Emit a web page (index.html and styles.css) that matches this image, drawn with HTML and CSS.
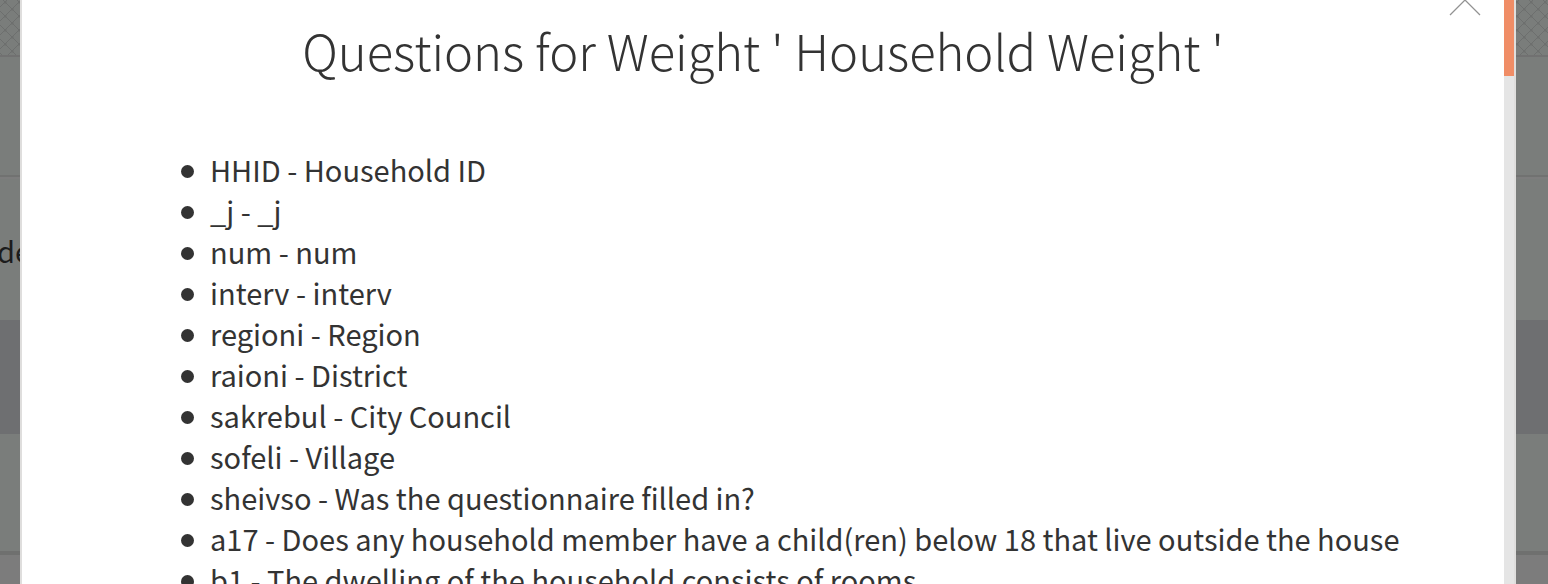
FILE: index.html
```html
<!DOCTYPE html>
<html lang="en">
<head>
<meta charset="utf-8">
<title>Questions for Weight</title>
<link rel="stylesheet" href="styles.css">
</head>
<body>
<div class="backdrop" aria-hidden="true">
  <svg class="lattice" width="100%" height="55">
    <defs>
      <pattern id="diamonds" width="14" height="14" patternUnits="userSpaceOnUse">
        <path d="M3 0L14 11M0 11L3 14M0 7L7 0M7 14L14 7" stroke="#6d6f6e" stroke-width="1" fill="none"/>
        <path d="M4 2h3M5 1v3M11 9h3M12 8v3" stroke="#6d6f6e"/>
      </pattern>
    </defs>
    <rect width="100%" height="100%" fill="url(#diamonds)"/>
  </svg>
  <div class="band band-head"></div>
  <div class="band band-row">de</div>
  <div class="band band-alt"></div>
  <div class="band band-last"></div>
  <div class="band band-foot"></div>
</div>
<main class="modal" role="dialog" aria-labelledby="title">
  <div class="content">
    <button class="up" type="button" aria-label="Scroll up">
      <svg width="32" height="16" viewBox="0 0 32 16"><path d="M1 15L16 0L31 15" fill="none" stroke="#929292" stroke-width="1.3"/></svg>
    </button>
    <h1 class="title" id="title">Questions for Weight ' Household Weight '</h1>
    <ul class="questions">
      <li>HHID - Household ID</li>
      <li>_j - _j</li>
      <li>num - num</li>
      <li>interv - interv</li>
      <li>regioni - Region</li>
      <li>raioni - District</li>
      <li>sakrebul - City Council</li>
      <li>sofeli - Village</li>
      <li>sheivso - Was the questionnaire filled in?</li>
      <li>a17 - Does any household member have a child(ren) below 18 that live outside the house</li>
      <li>b1 - The dwelling of the household consists of rooms</li>
    </ul>
  </div>
  <div class="track"><div class="thumb"></div></div>
</main>
</body>
</html>
```
FILE: styles.css
```css
* { box-sizing: border-box; }
body {
  margin: 0;
  height: 100vh;
  overflow: hidden;
  color: #333;
  background: #7a7d7b;
  font-family: "Noto Sans CJK SC", "Noto Sans", sans-serif;
}
.backdrop {
  position: absolute;
  inset: 0;
  z-index: -1;
  display: flex;
  flex-direction: column;
  overflow: hidden;
  background: #7a7d7b;
  color: #1c1c1c;
  font-size: 29px;
}
.lattice { display: block; flex: none; }
.band { flex: none; }
.band-head { height: 122px; border-top: 2px solid #717171; border-bottom: 2px solid #717271; }
.band-row { height: 143px; padding-top: 51px; text-indent: -3px; line-height: 41px; border-top: 2px solid #7d7d7d; }
.band-alt { height: 114px; background: #6e6f71; }
.band-last { height: 121px; border-bottom: 4px solid #6f706f; }
.band-foot { flex: 1; background: #7c7c7c; }
.modal {
  display: flex;
  height: 100%;
  margin: 0 32px 0 20px;
  border: solid #dfdedd;
  border-width: 0 2px;
  background: #fff;
}
.content { position: relative; flex: 1; min-width: 0; overflow: hidden; }
.up {
  position: absolute;
  top: 0;
  right: 23px;
  padding: 0;
  border: 0;
  background: none;
}
.up svg { display: block; }
.title {
  margin: 0;
  padding-top: 14px;
  font-size: 49px;
  line-height: 72px;
  font-weight: 200;
  text-align: center;
}
.questions {
  margin: 63px 0 0;
  padding: 0 120px 0 159px;
  list-style: none;
  font-size: 29px;
  line-height: 41px;
}
.questions li { display: flex; align-items: flex-start; gap: 16px; white-space: nowrap; }
.questions li::before {
  content: "";
  flex: none;
  width: 13px;
  height: 13px;
  margin-top: 16px;
  border-radius: 50%;
  background: #333;
}
.track { flex: none; width: 10px; background: #e5e5e5; }
.thumb { height: 76px; background: #f08d66; }
```
